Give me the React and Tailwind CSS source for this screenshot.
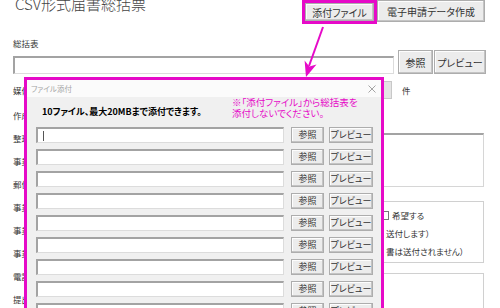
import React from 'react';

// ボタン（Windows風の立体ボタン）
const Btn = ({ className = '', children }) => (
  <button
    className={`flex shrink-0 items-center justify-center whitespace-nowrap border border-[#adadad] bg-[#ececec] text-[#333] shadow-[inset_-1px_-1px_0_#c4c4c4,inset_1px_1px_0_#fdfdfd] ${className}`}
  >
    {children}
  </button>
);

// 入力欄（くぼんだ枠）
const Field = ({ className = '', children }) => (
  <div
    className={`flex shrink-0 items-center border-b border-l-2 border-r border-t-2 border-b-[#dcdcdc] border-l-[#a3a3a3] border-r-[#dcdcdc] border-t-[#a3a3a3] bg-white ${className}`}
  >
    {children}
  </div>
);

const labels = ['作成年月日', '整理記号', '事業所番号', '郵便番号', '事業所所在地', '事業所名称', '事業主氏名', '電話番号', '提出者'];
const rows = [0, 1, 2, 3, 4, 5, 6, 7, 8, 9];

export default function App() {
  return (
    <div className="relative h-[308px] w-[500px] overflow-hidden bg-white font-['Noto_Sans_CJK_JP','Noto_Sans',sans-serif] text-[#333] [font-feature-settings:'palt']">
      {/* ヘッダー */}
      <div className="flex h-[24px] items-start justify-between pr-[15px]">
        <h1 className="-mt-[4px] whitespace-nowrap pl-[15px] text-[15px] font-light leading-[16px] text-[#444]">
          CSV形式届書総括票
        </h1>
        <div className="flex items-start">
          <div className="h-[24px] w-[75px] border-[3px] border-[#e60ac8]">
            <Btn className="h-full w-full text-[10px]">添付ファイル</Btn>
          </div>
          <Btn className="h-[22px] w-[108px] text-[10px]">電子申請データ作成</Btn>
        </div>
      </div>

      {/* 総括表 */}
      <div className="mt-[14px] pl-[13px] text-[8.5px] leading-[10px]">総括表</div>
      <div className="mt-[2px] flex items-end pl-[13px]">
        <Field className="h-[18px] w-[381px]" />
        <Btn className="ml-[4px] h-[24px] w-[35px] text-[10px]">参照</Btn>
        <Btn className="ml-[1px] h-[24px] w-[52px] text-[10px]">プレビュー</Btn>
      </div>

      {/* 背面のフォーム */}
      <div className="mt-[2px] flex">
        <div className="flex w-[250px] shrink-0 flex-col pl-[13px] text-[8.5px]">
          <div className="flex h-[28px] items-center whitespace-nowrap">媒体数</div>
          {labels.map((l, i) => (
            <div key={i} className="flex h-[23px] items-center whitespace-nowrap">
              {l}
            </div>
          ))}
        </div>
        <div className="flex w-[234px] shrink-0 flex-col text-[8.5px]">
          <div className="flex h-[28px] items-center">
            <div className="h-[18px] w-[142px] border border-[#c8c8c8] bg-[#e4e4e4]" />
            <span className="ml-[10px]">件</span>
          </div>
          <div className="mt-[29px] h-[54px] border-x border-b border-t-2 border-x-[#d6d6d6] border-b-[#d6d6d6] border-t-[#a3a3a3] bg-white" />
          <div className="mt-[14px] flex h-[62px] flex-col border border-[#d0d0d0] pt-[4px]">
            <div className="flex h-[18px] items-center pl-[129px]">
              <span className="h-[9px] w-[9px] border border-[#777] bg-white" />
              <span className="ml-[3px]">希望する</span>
            </div>
            <div className="flex h-[18px] items-center whitespace-nowrap pl-[135px]">送付します）</div>
            <div className="flex h-[18px] items-center whitespace-nowrap pl-[135px]">書は送付されません）</div>
          </div>
          <div className="mt-[10px] h-[50px] border border-[#d0d0d0]" />
        </div>
      </div>

      {/* ファイル添付ダイアログ */}
      <div className="absolute left-[24px] top-[77px] flex h-[250px] w-[360px] flex-col border-[3px] border-[#e60ac8] bg-[#f0f0f0]">
        <div className="flex h-[17px] shrink-0 items-center justify-between bg-[#fbfbfb] pl-[4px] pr-[5px]">
          <span className="text-[7.5px] text-[#a5a5a5]">ファイル添付</span>
          <svg width="8" height="8" viewBox="0 0 8 8" className="text-[#9a9a9a]">
            <path d="M0.5 0.5 L7.5 7.5 M7.5 0.5 L0.5 7.5" stroke="currentColor" strokeWidth="0.9" />
          </svg>
        </div>
        <div className="flex h-[30px] shrink-0">
          <div className="w-[205px] whitespace-nowrap pl-[15px] pt-[9px] text-[9px] font-bold leading-[11px] text-black">
            10ファイル、最大20MBまで添付できます。
          </div>
          <div className="whitespace-nowrap text-[9.5px] leading-[11px] text-[#e60ac8]">
            ※「添付ファイル」から総括表を
            <br />
            添付しないでください。
          </div>
        </div>
        <div className="flex flex-col gap-[6px] pl-[9px]">
          {rows.map((i) => (
            <div key={i} className="flex h-[16px] items-center">
              <Field className="h-[16px] w-[248px]">
                {i === 0 && <span className="ml-[5px] block h-[10px] w-px bg-[#555]" />}
              </Field>
              <Btn className="ml-[7px] h-[16px] w-[33px] text-[9px]">参照</Btn>
              <Btn className="ml-[5px] h-[16px] w-[44px] text-[9px]">プレビュー</Btn>
            </div>
          ))}
        </div>
      </div>

      {/* 矢印 */}
      <svg className="pointer-events-none absolute left-[292px] top-[24px]" width="36" height="56" viewBox="0 0 36 56">
        <line x1="31" y1="3" x2="17" y2="42" stroke="#e60ac8" strokeWidth="2" />
        <polygon points="14,53 24.5,40.5 17.3,42.5 12.6,36.5" fill="#e60ac8" />
      </svg>
    </div>
  );
}
